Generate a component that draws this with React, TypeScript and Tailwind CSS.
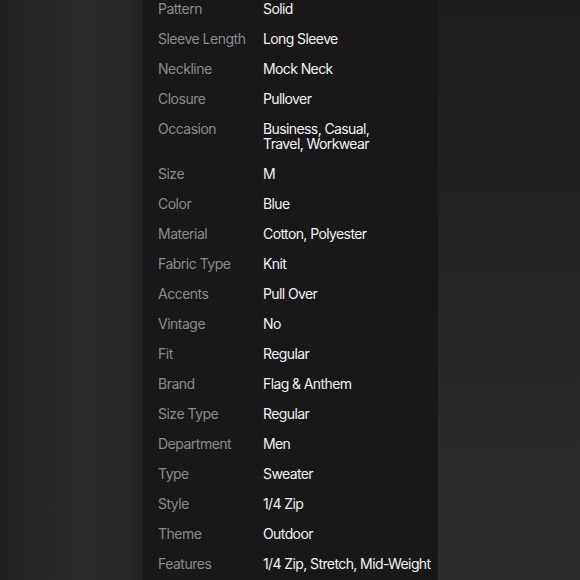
import React from "react";

const rows: [string, string[]][] = [
  ["Pattern", ["Solid"]],
  ["Sleeve Length", ["Long Sleeve"]],
  ["Neckline", ["Mock Neck"]],
  ["Closure", ["Pullover"]],
  ["Occasion", ["Business, Casual,", "Travel, Workwear"]],
  ["Size", ["M"]],
  ["Color", ["Blue"]],
  ["Material", ["Cotton, Polyester"]],
  ["Fabric Type", ["Knit"]],
  ["Accents", ["Pull Over"]],
  ["Vintage", ["No"]],
  ["Fit", ["Regular"]],
  ["Brand", ["Flag & Anthem"]],
  ["Size Type", ["Regular"]],
  ["Department", ["Men"]],
  ["Type", ["Sweater"]],
  ["Style", ["1/4 Zip"]],
  ["Theme", ["Outdoor"]],
  ["Features", ["1/4 Zip, Stretch, Mid-Weight"]],
];

export default function App() {
  return (
    <div className="flex h-[580px] w-[580px] overflow-hidden">
      <div className="w-[143px] shrink-0 bg-[linear-gradient(90deg,#1f1f1f_0px,#262626_30px,#2a2a2a_80px,#282828_130px,#1f1f1f_143px)]" />
      <div
        className="w-[295px] shrink-0 bg-[#181818] pl-[15px] pt-[1px] text-[14px] leading-[15px]"
        style={{ fontFamily: "Inter, 'Noto Sans', sans-serif" }}
      >
        <div className="flex flex-col gap-[15px]">
          {rows.map(([k, v]) => (
            <div key={k} className="flex">
              <div className="w-[105px] shrink-0 tracking-[-0.5px] text-[#8b8b8b]">{k}</div>
              <div className="whitespace-nowrap tracking-[-0.6px] text-[#f2f2f2]">
                {v.map((line) => (
                  <div key={line}>{line}</div>
                ))}
              </div>
            </div>
          ))}
        </div>
      </div>
      <div className="flex-1 bg-[linear-gradient(180deg,#1d1d1d_0%,#222222_40%,#2a2a2a_80%,#2c2c2c_100%)]" />
    </div>
  );
}
